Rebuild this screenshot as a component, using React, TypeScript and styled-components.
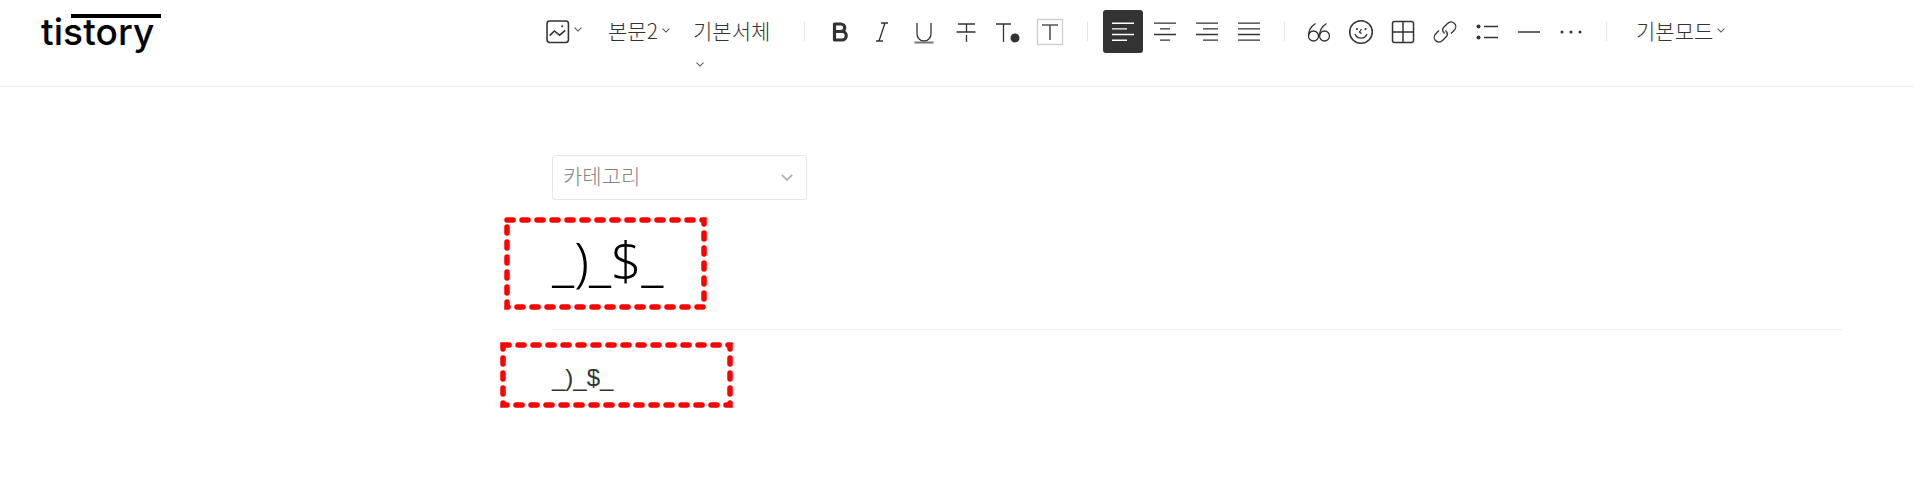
import React from "react";
import styled, { createGlobalStyle } from "styled-components";

const GlobalStyle = createGlobalStyle`
  html, body {
    margin: 0;
    padding: 0;
    background: #fff;
    font-family: "Noto Sans CJK KR", "Noto Sans", sans-serif;
  }
`;

const Header = styled.header`
  display: flex;
  align-items: flex-start;
  height: 86px;
  border-bottom: 1px solid #ebebeb;
`;

const Logo = styled.div`
  position: relative;
  width: 546px;
  padding: 9px 0 0 41px;
  box-sizing: border-box;
  font-family: Inter, sans-serif;
  font-weight: 500;
  font-size: 37px;
  line-height: 46px;
  letter-spacing: 0.1px;
  color: #000;

  &::after {
    content: "";
    position: absolute;
    left: 71px;
    top: 14px;
    width: 90px;
    height: 4px;
    background: #000;
  }
`;

const Toolbar = styled.div`
  display: flex;
  align-items: flex-start;
  padding-top: 10px;
`;

const Dropdown = styled.div<{ $width: number; $gap: number }>`
  width: ${props => props.$width}px;
  margin-right: ${props => props.$gap}px;
  min-height: 43px;
  font-size: 21px;
  font-weight: 300;
  line-height: 40px;
  color: #333;
  white-space: nowrap;

  svg {
    margin-left: 4px;
    vertical-align: 6px;
  }
`;

const WrapDropdown = styled(Dropdown)`
  line-height: 30px;
  padding-top: 5px;
  white-space: normal;

  svg {
    display: inline-block;
    margin-left: 3px;
    vertical-align: 2px;
  }
`;

const ImageButton = styled.div`
  display: flex;
  align-items: center;
  width: 62px;
  height: 43px;
  gap: 4px;

  svg + svg {
    margin-top: -4px;
  }
`;

const Divider = styled.div<{ $left: number; $right: number }>`
  width: 1px;
  height: 19px;
  margin: 12px ${props => props.$right}px 0 ${props => props.$left}px;
  background: #e4e4e4;
`;

const ToolButton = styled.button<{ $active?: boolean }>`
  display: flex;
  align-items: center;
  justify-content: center;
  flex: none;
  width: 40px;
  height: 43px;
  margin: 0 1px;
  padding: 0;
  border: 0;
  border-radius: 3px;
  background: ${props => (props.$active ? "#333" : "transparent")};
  color: ${props => (props.$active ? "#fff" : "#333")};
`;

const Main = styled.main`
  width: 1290px;
  margin-left: 552px;
`;

const CategorySelect = styled.div`
  display: flex;
  align-items: center;
  justify-content: space-between;
  width: 255px;
  height: 45px;
  margin-top: 68px;
  padding: 0 13px 0 10px;
  box-sizing: border-box;
  border: 1px solid #e6e6e6;
  border-radius: 3px;
  color: #858585;
  font-size: 21px;
  font-weight: 300;
  line-height: 38px;

  span {
    margin-top: -5px;
  }
`;

const TitleBlock = styled.div`
  position: relative;
  height: 129px;
  border-bottom: 1px solid #eee;
`;

const TitleText = styled.div`
  padding-top: 25px;
  font-family: "Noto Sans", sans-serif;
  font-weight: 300;
  font-size: 53px;
  line-height: 72px;
  color: #000;
`;

const BodyBlock = styled.div`
  position: relative;
  height: 146px;
`;

const BodyText = styled.div`
  padding-top: 30px;
  font-family: "Liberation Sans", Arial, sans-serif;
  font-size: 24px;
  line-height: 36px;
  color: #333;
`;

const Annotation = styled.svg<{ $left: number; $top: number }>`
  position: absolute;
  left: ${props => props.$left}px;
  top: ${props => props.$top}px;
  overflow: visible;
`;

const Chevron: React.FC<{ size?: number; color?: string }> = ({ size = 8, color = "#555" }) => (
  <svg width={size} height={size * 0.6} viewBox="0 0 10 6" fill="none" stroke={color} strokeWidth="1.3">
    <path d="M0.7 0.7 5 5 9.3 0.7" />
  </svg>
);

const Icon: React.FC<{ children: React.ReactNode }> = ({ children }) => (
  <svg width="28" height="28" viewBox="0 0 28 28" fill="none" stroke="currentColor" strokeWidth="1.3">
    {children}
  </svg>
);

const RedBox: React.FC<{ left: number; top: number; width: number; height: number }> = ({ left, top, width, height }) => (
  <Annotation $left={left} $top={top} width={width} height={height}>
    <rect
      x="0"
      y="0"
      width={width}
      height={height}
      fill="none"
      stroke="#ff0000"
      strokeWidth="5.5"
      strokeLinecap="round"
      strokeDasharray="6 9"
    />
  </Annotation>
);

const App: React.FC = () => {
  return (
    <>
      <GlobalStyle />
      <Header>
        <Logo>tistory</Logo>
        <Toolbar>
          <ImageButton>
            <svg width="24" height="24" viewBox="0 0 23 23" fill="none" stroke="#333" strokeWidth="1.5">
              <rect x="1" y="1" width="20.5" height="20.5" rx="2.5" />
              <path d="M3.5 15 8 10.500 13 14.500 18.500 10" />
              <circle cx="15.500" cy="6" r="1" fill="#333" stroke="none" />
            </svg>
            <Chevron />
          </ImageButton>
          <Dropdown $width={58} $gap={27}>
            본문2
            <Chevron />
          </Dropdown>
          <WrapDropdown $width={79} $gap={32}>
            기본서체
            <Chevron />
          </WrapDropdown>
          <Divider $left={0} $right={14} />
          <ToolButton>
            <Icon>
              <path d="M8.500 6h6.500a3.700 3.700 0 0 1 0 7.500H8.500z M8.500 13.500h7.500a4.200 4.200 0 0 1 0 8.500H8.500z" strokeWidth="3.200" strokeLinejoin="round" />
            </Icon>
          </ToolButton>
          <ToolButton>
            <Icon>
              <path d="M13 5h7M8 23h7M17 5 11 23" />
            </Icon>
          </ToolButton>
          <ToolButton>
            <Icon>
              <path d="M7 5v11a7 7 0 0 0 14 0V5" />
              <path d="M4.500 24.500h19" strokeWidth="2" stroke="#777" />
            </Icon>
          </ToolButton>
          <ToolButton>
            <Icon>
              <path d="M6 6h17M14.500 6v8M4.500 14h19M14.500 17v7" />
            </Icon>
          </ToolButton>
          <ToolButton>
            <Icon>
              <path d="M2 6h15M9.500 6v18" />
              <circle cx="21" cy="20" r="4.500" fill="currentColor" stroke="none" />
            </Icon>
          </ToolButton>
          <ToolButton>
            <Icon>
              <rect x="1.500" y="1.500" width="25" height="25" stroke="#ccc" />
              <path d="M6 7h16M14 7v15" stroke="#555" strokeWidth="1.600" />
            </Icon>
          </ToolButton>
          <Divider $left={16} $right={14} />
          <ToolButton $active>
            <Icon>
              <path d="M3 5.200h22M3 10.900h15M3 16.500h22M3 22.200h15" strokeWidth="1.400" />
            </Icon>
          </ToolButton>
          <ToolButton>
            <Icon>
              <path d="M3 5.200h22M9 10.900h10M3 16.500h22M9 22.200h10" />
            </Icon>
          </ToolButton>
          <ToolButton>
            <Icon>
              <path d="M3 5.200h22M10 10.900h15M3 16.500h22M10 22.200h15" />
            </Icon>
          </ToolButton>
          <ToolButton>
            <Icon>
              <path d="M3 5.200h22M3 10.900h22M3 16.500h22M3 22.200h22" />
            </Icon>
          </ToolButton>
          <Divider $left={14} $right={13} />
          <ToolButton>
            <Icon>
              <circle cx="8.500" cy="18" r="5" />
              <path d="M3.500 18C3.500 12 6.500 8 10.500 5.500" />
              <circle cx="19.500" cy="18" r="5" />
              <path d="M14.500 18C14.500 12 17.500 8 21.500 5.500" />
            </Icon>
          </ToolButton>
          <ToolButton>
            <Icon>
              <circle cx="14" cy="14" r="11.300" strokeWidth="1.500" />
              <path d="M8 16c2 5.500 10 5.500 12 0" />
              <circle cx="10" cy="11" r="1.100" fill="currentColor" stroke="none" />
              <circle cx="18.500" cy="11" r="1.100" fill="currentColor" stroke="none" />
              <path d="M14.500 11 12.500 14l2 1.500" />
            </Icon>
          </ToolButton>
          <ToolButton>
            <Icon>
              <rect x="3.500" y="3.500" width="21" height="21" rx="2" strokeWidth="1.500" />
              <path d="M14 3.500v21M3.500 14h21" strokeWidth="1.500" />
            </Icon>
          </ToolButton>
          <ToolButton>
            <Icon>
              <path d="M13.500 15.500C11 13 11.500 10.500 13 9L16 6C18.500 3.500 21.500 3.500 23.500 5.500C25.500 7.500 25 10.500 23 12.500L20 15.500" />
              <path d="M14.500 12.500C17 15 16.500 17.500 15 19L12 22C9.500 24.500 6.500 24.500 4.500 22.500C2.500 20.500 3 17.500 5 15.500L8 12.500" />
            </Icon>
          </ToolButton>
          <ToolButton>
            <Icon>
              <circle cx="5.500" cy="8.500" r="2" fill="currentColor" stroke="none" />
              <circle cx="5.500" cy="19.500" r="2" fill="currentColor" stroke="none" />
              <path d="M11 8.500h14M11 19.500h14" strokeWidth="1.500" />
            </Icon>
          </ToolButton>
          <ToolButton>
            <Icon>
              <path d="M3 14h22" strokeWidth="1.500" />
            </Icon>
          </ToolButton>
          <ToolButton>
            <Icon>
              <circle cx="5" cy="14" r="1.500" fill="currentColor" stroke="none" />
              <circle cx="14" cy="14" r="1.500" fill="currentColor" stroke="none" />
              <circle cx="23" cy="14" r="1.500" fill="currentColor" stroke="none" />
            </Icon>
          </ToolButton>
          <Divider $left={14} $right={29} />
          <Dropdown $width={92} $gap={0}>
            기본모드
            <Chevron />
          </Dropdown>
        </Toolbar>
      </Header>
      <Main>
        <CategorySelect>
          <span>카테고리</span>
          <Chevron size={12} color="#aaa" />
        </CategorySelect>
        <TitleBlock>
          <TitleText>_)_$_</TitleText>
          <RedBox left={-45} top={20} width={197} height={87} />
        </TitleBlock>
        <BodyBlock>
          <BodyText>_)_$_</BodyText>
          <RedBox left={-49} top={15} width={227} height={60} />
        </BodyBlock>
      </Main>
    </>
  );
};

export default App;
